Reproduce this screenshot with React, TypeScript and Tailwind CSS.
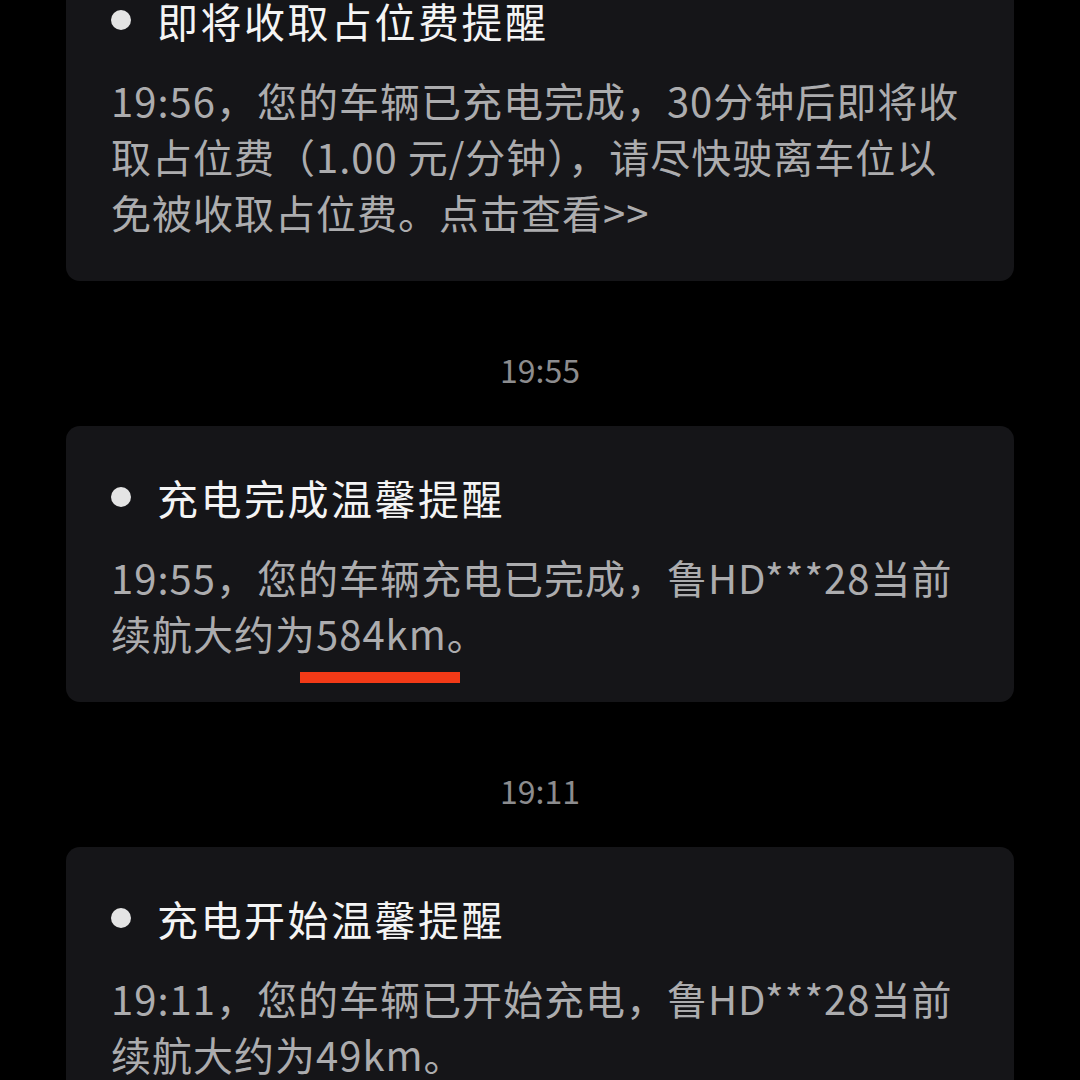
const FONT = { fontFamily: '"Noto Sans CJK SC", "Noto Sans", sans-serif' };

interface Notice {
  stamp?: string;
  title: string;
  lines: string[];
  mark?: boolean;
}

const NOTICES: Notice[] = [
  {
    title: "即将收取占位费提醒",
    lines: [
      "19:56，您的车辆已充电完成，30分钟后即将收",
      "取占位费（1.00 元/分钟），请尽快驶离车位以",
      "免被收取占位费。点击查看>>",
    ],
  },
  {
    stamp: "19:55",
    title: "充电完成温馨提醒",
    lines: ["19:55，您的车辆充电已完成，鲁HD***28当前", "续航大约为584km。"],
    mark: true,
  },
  {
    stamp: "19:11",
    title: "充电开始温馨提醒",
    lines: ["19:11，您的车辆已开始充电，鲁HD***28当前", "续航大约为49km。"],
  },
];

function NoticeCard({ notice }: { notice: Notice }) {
  return (
    <div className="relative rounded-[14px] bg-[#151518] px-[45px] pt-[43px] pb-[41px]">
      <div className="flex items-center h-[56px]">
        <span className="w-[20px] h-[20px] rounded-full bg-[#e4e4e4] shrink-0" />
        <span className="ml-[26px] text-[41px] leading-[56px] tracking-[2.5px] font-normal text-[#f4f4f4]">
          {notice.title}
        </span>
      </div>
      <div className="mt-6 text-[40px] leading-[56px] tracking-[1px] text-[#acacae]">
        {notice.lines.map((line) => (
          <div key={line} className="whitespace-nowrap">
            {line}
          </div>
        ))}
      </div>
      {/* red mark under the range value */}
      {notice.mark && (
        <div className="absolute left-[234px] top-[246px] w-[160px] h-[11px] bg-[#f23a17]" />
      )}
    </div>
  );
}

export default function App() {
  return (
    <div className="w-[1080px] h-[1080px] overflow-hidden bg-black" style={FONT}>
      <div className="px-[66px] -mt-[51px]">
        {NOTICES.map((n) => (
          <div key={n.title}>
            {n.stamp && (
              <div className="pt-[68px] pb-[37px] h-[145px] text-center text-[32px] leading-[40px] text-[#8c8c8e]">
                {n.stamp}
              </div>
            )}
            <NoticeCard notice={n} />
          </div>
        ))}
      </div>
    </div>
  );
}
